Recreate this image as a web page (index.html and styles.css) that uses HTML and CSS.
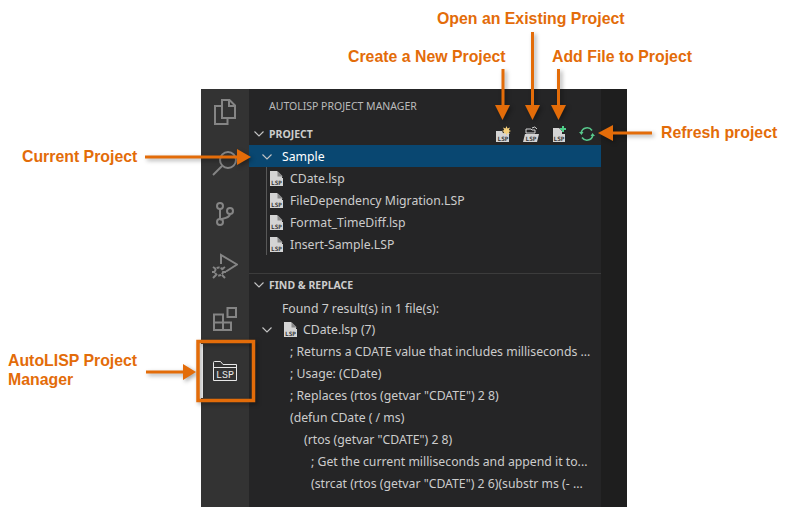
FILE: index.html
```html
<!DOCTYPE html>
<html lang="en">
<head>
<meta charset="utf-8">
<title>AutoLISP Project Manager</title>
<link rel="stylesheet" href="styles.css">
</head>
<body>
<svg class="defs" width="0" height="0" aria-hidden="true">
  <defs>
    <symbol id="lspfile" viewBox="0 0 13 15">
      <path d="M0 0h7l5 5v2H0z" fill="#d4d4d4"/>
      <path d="M7.500 0L13 5.500H7.500z" fill="#8a8a8a"/>
      <rect x="0" y="7" width="13" height="8" fill="#d4d4d4"/>
      <text x="6.500" y="14" class="micro dark">LSP</text>
    </symbol>
    <symbol id="chev" viewBox="0 0 12 12">
      <path d="M1.500 3.500L6 8l4.500-4.500" fill="none" stroke="#c5c5c5" stroke-width="1.100"/>
    </symbol>
  </defs>
</svg>

<main class="window">
  <nav class="activity">
    <div class="act-item act-first">
      <svg width="22" height="26" viewBox="0 0 22 26"><path d="M8 1h7.500L21 6.500V19H8zM15 1v6h6M8 7H1v18h12.500v-6" fill="none" stroke="#858585" stroke-width="2"/></svg>
    </div>
    <div class="act-item">
      <svg width="32" height="32" viewBox="0 0 32 32"><circle cx="19" cy="15" r="8" fill="none" stroke="#858585" stroke-width="2"/><path d="M13 21L4 30" stroke="#858585" stroke-width="2"/></svg>
    </div>
    <div class="act-item">
      <svg width="18" height="24" viewBox="0 0 18 24"><g fill="none" stroke="#858585" stroke-width="2"><circle cx="4" cy="4" r="3"/><circle cx="4" cy="20" r="3"/><circle cx="14" cy="9" r="3"/><path d="M4 7v10M14 12c0 3.500-5 4-10 5.500"/></g></svg>
    </div>
    <div class="act-item">
      <svg width="26" height="26" viewBox="0 0 26 26"><g fill="none" stroke="#858585" stroke-width="2"><path d="M9 11V2l16 9.500-11 7"/><circle cx="7" cy="18.500" r="4" stroke-dasharray="3 1"/><path d="M1 14l3 2M13 14l-3 2M0 19h3M11 19h3M1 25l3-3M13 25l-3-3"/></g></svg>
    </div>
    <div class="act-item">
      <svg width="24" height="24" viewBox="0 0 24 24"><g fill="none" stroke="#858585" stroke-width="2"><path d="M1 7.500h9V23H1zM1 15.500h17V23h-8"/><rect x="14.500" y="1" width="8.500" height="9"/></g></svg>
    </div>
    <div class="act-item act-active">
      <svg width="24" height="20" viewBox="0 0 24 20"><path d="M.5 19.500V1.500q0-1 1-1h6l2.500 3h13.500v16zM.5 6.500H23.500" fill="none" stroke="#e8e8e8"/><text x="12" y="16.500" class="lsp-big">LSP</text></svg>
    </div>
  </nav>

  <section class="sidebar">
    <h1 class="title">AUTOLISP PROJECT MANAGER</h1>

    <div class="pane-head project-head">
      <svg class="chev" width="12" height="12"><use href="#chev"/></svg>
      <span class="pane-name">PROJECT</span>
      <div class="actions">
        <svg class="tool" width="16" height="16" viewBox="0 0 16 16">
          <path d="M1 5h6l1 2h6v9H1z" fill="#d4d4d4"/>
          <path d="M11.500 0l1 2.500L15 1.500 13.800 4 16 5l-2.200 1L15 8l-2.500-1-1 2.500-1-2.500L8 8l1.200-2L7 5l2.200-1L8 1.500l2.500 1z" fill="#f5cf7a"/>
          <text x="8" y="15" class="micro dark">LSP</text>
        </svg>
        <svg class="tool" width="16" height="16" viewBox="0 0 16 16">
          <path d="M3 7V3h5l1 1h3v3z" fill="none" stroke="#d4d4d4"/>
          <path d="M2 8h14l-2 8H0z" fill="#d4d4d4"/>
          <path d="M9 2q3-2.500 5 1" fill="none" stroke="#d4d4d4"/>
          <text x="8" y="15" class="micro dark">LSP</text>
        </svg>
        <svg class="tool" width="16" height="16" viewBox="0 0 16 16">
          <path d="M2 2h6l3 3v3h3v8H2z" fill="#d4d4d4"/>
          <path d="M12 0v6M9 3h6" stroke="#4fd08a" stroke-width="2"/>
          <text x="8" y="15" class="micro dark">LSP</text>
        </svg>
        <svg class="tool refresh" width="16" height="16" viewBox="0 0 16 16">
          <g fill="none" stroke="#58c98c" stroke-width="1.500">
            <path d="M2.200 6.500A6 6 0 0 1 13 4.500"/>
            <path d="M13.800 9.500A6 6 0 0 1 3 11.500"/>
          </g>
          <path d="M0 6l4.500 0-2 3zM16 10l-4.500 0 2-3z" fill="#58c98c"/>
        </svg>
      </div>
    </div>

    <div class="row selected">
      <svg class="chev-in" width="12" height="12"><use href="#chev"/></svg>
      <span>Sample</span>
    </div>
    <ul class="files">
      <li class="row file"><svg class="ficon" width="13" height="15"><use href="#lspfile"/></svg><span>CDate.lsp</span></li>
      <li class="row file"><svg class="ficon" width="13" height="15"><use href="#lspfile"/></svg><span>FileDependency Migration.LSP</span></li>
      <li class="row file"><svg class="ficon" width="13" height="15"><use href="#lspfile"/></svg><span>Format_TimeDiff.lsp</span></li>
      <li class="row file"><svg class="ficon" width="13" height="15"><use href="#lspfile"/></svg><span>Insert-Sample.LSP</span></li>
    </ul>

    <div class="pane-head find-head">
      <svg class="chev" width="12" height="12"><use href="#chev"/></svg>
      <span class="pane-name">FIND &amp; REPLACE</span>
    </div>
    <div class="row found">Found 7 result(s) in 1 file(s):</div>
    <div class="row result-file">
      <svg class="chev-in" width="12" height="12"><use href="#chev"/></svg>
      <svg class="ficon2" width="13" height="15"><use href="#lspfile"/></svg>
      <span>CDate.lsp (7)</span>
    </div>
    <div class="row line">; Returns a CDATE value that includes milliseconds ...</div>
    <div class="row line">; Usage: (CDate)</div>
    <div class="row line">; Replaces (rtos (getvar "CDATE") 2 8)</div>
    <div class="row line">(defun CDate ( / ms)</div>
    <div class="row line in1">(rtos (getvar "CDATE") 2 8)</div>
    <div class="row line in2">; Get the current milliseconds and append it to...</div>
    <div class="row line in2">(strcat (rtos (getvar "CDATE") 2 6)(substr ms (- ...</div>
  </section>
  <div class="gutter"></div>
</main>

<svg class="arrows" width="788" height="507" viewBox="0 0 788 507" aria-hidden="true">
  <rect x="198" y="341.500" width="55.500" height="59" fill="none" stroke="#e36c09" stroke-width="3.500"/>
  <g stroke="#e36c09" stroke-width="3" fill="#e36c09">
    <path d="M503 69V106"/><path d="M495 105h15l-7.500 15z" stroke="none"/>
    <path d="M532.500 32V106"/><path d="M525 105h15l-7.500 15z" stroke="none"/>
    <path d="M558.500 69V106"/><path d="M551 105h15l-7.500 15z" stroke="none"/>
    <path d="M652 133H612"/><path d="M613 125v16l-15-8z" stroke="none"/>
    <path d="M145 157H238"/><path d="M237 149v16l14-8z" stroke="none"/>
    <path d="M146 372H184"/><path d="M183 364v16l13-8z" stroke="none"/>
  </g>
</svg>

<p class="note n-open">Open an Existing Project</p>
<p class="note n-create">Create a New Project</p>
<p class="note n-add">Add File to Project</p>
<p class="note n-refresh">Refresh project</p>
<p class="note n-current">Current Project</p>
<p class="note n-lisp">AutoLISP Project<br>Manager</p>
</body>
</html>
```

FILE: styles.css
```css
* { box-sizing: border-box; }
html, body { margin: 0; height: 100%; }
body {
  background: #fff;
  overflow: hidden;
  padding: 89px 0 0 201px;
  font-family: "Noto Sans", sans-serif;
  position: relative;
}
.defs { position: absolute; }

.window {
  display: flex;
  width: 426px;
  height: 418px;
  background: #252526;
  overflow: hidden;
}
.activity {
  width: 48px;
  flex: none;
  background: #333;
  display: flex;
  flex-direction: column;
}
.act-item {
  height: 52.500px;
  flex: none;
  display: flex;
  align-items: center;
  justify-content: center;
}
.act-first { height: 46px; }
.act-active {
  margin-top: -1px;
  height: 54px;
  border-left: 2px solid #fff;
  padding-right: 2px;
}
.sidebar { width: 352px; flex: none; color: #ccc; font-size: 13px; }
.gutter { flex: 1; background: #1e1e1e; }

.title {
  margin: 0;
  height: 35px;
  padding-left: 20px;
  font-size: 10.500px;
  font-weight: 400;
  line-height: 35px;
  color: #bbb;
}
.pane-head {
  height: 21px;
  display: flex;
  align-items: center;
  padding-left: 4px;
  position: relative;
}
.project-head { padding-bottom: 2px; }
.chev { flex: none; margin-right: 4px; }
.pane-name { font-size: 10.500px; font-weight: 700; color: #ccc; }
.actions {
  position: absolute;
  top: 2px;
  left: 246px;
  display: flex;
  gap: 12px;
}
.tool { display: block; }
.micro {
  font-family: "DejaVu Sans Mono", monospace;
  font-size: 6px;
  font-weight: 700;
  text-anchor: middle;
}
.dark { fill: #333; }
.lsp-big {
  font-family: "Liberation Mono", monospace;
  font-size: 10px;
  fill: #e8e8e8;
  text-anchor: middle;
}

.row {
  height: 22px;
  padding-top: 1px;
  line-height: 21px;
  display: flex;
  align-items: center;
  white-space: nowrap;
  font-size: 12.250px;
}
.selected { background: #094771; color: #fff; padding-left: 12px; }
.chev-in { flex: none; margin-right: 9px; }
.files {
  list-style: none;
  margin: 0 0 18px 17px;
  padding: 0;
  border-left: 1px solid #585858;
}
.file { padding-left: 3px; }
.ficon { flex: none; margin-right: 7px; }
.find-head { border-top: 1px solid #3c3c3c; height: 23px; }
.found { padding-left: 33px; margin-top: 1px; margin-bottom: -1px; }
.result-file { padding-left: 12px; }
.result-file .chev-in { margin-right: 11px; }
.ficon2 { flex: none; margin-right: 6px; }
.line { padding-left: 41px; }
.in1 { padding-left: 55px; }
.in2 { padding-left: 62px; }

.arrows {
  position: absolute;
  left: 0;
  top: 0;
  filter: drop-shadow(2px 2px 2px rgba(0, 0, 0, .35));
}
.note {
  position: absolute;
  margin: 0;
  font-family: "Liberation Sans", sans-serif;
  font-size: 15.850px;
  font-weight: 700;
  line-height: 19px;
  color: #e36c09;
  white-space: nowrap;
}
.n-open { left: 437px; top: 9px; }
.n-create { left: 348px; top: 47px; }
.n-add { left: 552px; top: 47px; }
.n-refresh { left: 661px; top: 123px; }
.n-current { left: 22px; top: 147px; }
.n-lisp { left: 8px; top: 351px; }
```
